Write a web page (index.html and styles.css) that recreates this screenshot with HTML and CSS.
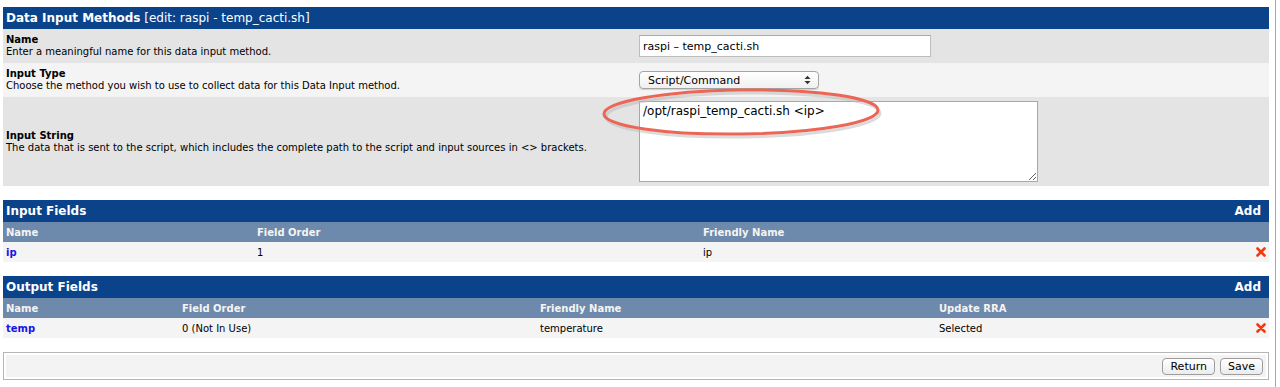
FILE: index.html
```html
<!DOCTYPE html>
<html lang="en">
<head>
  <meta charset="UTF-8">
  <title>Data Input Methods</title>
  <link rel="stylesheet" href="styles.css">
</head>
<body>
<div class="page">

  <!-- Edit form -->
  <div class="panel form">
    <div class="bar"><span class="bar-title"><b>Data Input Methods</b> [edit: raspi - temp_cacti.sh]</span></div>

    <div class="form-row dark">
      <div class="label"><b>Name</b><br>Enter a meaningful name for this data input method.</div>
      <div class="field"><input type="text" class="text-in" value="raspi – temp_cacti.sh"></div>
    </div>

    <div class="form-row light">
      <div class="label"><b>Input Type</b><br>Choose the method you wish to use to collect data for this Data Input method.</div>
      <div class="field">
        <span class="select-wrap">
          <select class="select-in"><option>Script/Command</option></select>
          <svg class="select-arrows" width="7" height="10" viewBox="0 0 7 10"><path d="M0.5 4 L3.5 0.8 L6.5 4 Z M0.5 6 L3.5 9.2 L6.5 6 Z" fill="#333"/></svg>
        </span>
      </div>
    </div>

    <div class="form-row dark tall">
      <div class="label"><b>Input String</b><br>The data that is sent to the script, which includes the complete path to the script and input sources in &lt;&gt; brackets.</div>
      <div class="field"><textarea class="area-in">/opt/raspi_temp_cacti.sh &lt;ip&gt;</textarea></div>
    </div>

    <!-- hand-drawn highlight over the input string -->
    <svg class="annot" width="300" height="60" viewBox="0 0 300 60">
      <ellipse cx="151" cy="30" rx="137" ry="22" transform="rotate(-0.8 151 30) translate(1 2)" fill="none" stroke="#b8b8b8" stroke-width="3" opacity="0.5"/>
      <ellipse cx="150" cy="29" rx="137" ry="22" transform="rotate(-0.8 150 29)" fill="none" stroke="#ec6656" stroke-width="3"/>
    </svg>
  </div>

  <!-- Input fields -->
  <div class="panel">
    <div class="bar"><span class="bar-title">Input Fields</span><a class="bar-link" href="#">Add</a></div>
    <div class="grid in-cols head">
      <span>Name</span><span>Field Order</span><span>Friendly Name</span><span></span>
    </div>
    <div class="grid in-cols row">
      <a class="item" href="#">ip</a><span>1</span><span>ip</span>
      <span class="del"><svg width="10" height="10" viewBox="0 0 10 10"><path d="M1.5 1.5 L8.5 8.5 M8.5 1.5 L1.5 8.5" stroke="#f23a10" stroke-width="2.6" stroke-linecap="round"/></svg></span>
    </div>
  </div>

  <!-- Output fields -->
  <div class="panel">
    <div class="bar"><span class="bar-title">Output Fields</span><a class="bar-link" href="#">Add</a></div>
    <div class="grid out-cols head">
      <span>Name</span><span>Field Order</span><span>Friendly Name</span><span>Update RRA</span><span></span>
    </div>
    <div class="grid out-cols row">
      <a class="item" href="#">temp</a><span>0 (Not In Use)</span><span>temperature</span><span>Selected</span>
      <span class="del"><svg width="10" height="10" viewBox="0 0 10 10"><path d="M1.5 1.5 L8.5 8.5 M8.5 1.5 L1.5 8.5" stroke="#f23a10" stroke-width="2.6" stroke-linecap="round"/></svg></span>
    </div>
  </div>

  <!-- Actions -->
  <div class="actions">
    <div class="actions-inner">
      <button class="btn">Return</button>
      <button class="btn">Save</button>
    </div>
  </div>

</div>
</body>
</html>
```

FILE: styles.css
```css
/* Base */
* { margin: 0; padding: 0; box-sizing: border-box; }
body { font-family: "DejaVu Sans", Verdana, sans-serif; font-size: 10px; color: #000; background: #fff; overflow: hidden; }

.page {
  width: 1276px; min-height: 100vh;
  padding: 7px 6px 8px 3px;
  border-right: 1px solid #a9a9a9;
  display: flex; flex-direction: column; gap: 14px;
}

/* Panels and title bars */
.panel { position: relative; }
.bar {
  display: flex; justify-content: space-between; align-items: center;
  height: 22px; padding: 0 8px 0 3px;
  background-color: #0b438b; color: #fff; font-size: 12px;
}
.panel .bar-title { font-weight: bold; }
.form .bar-title { font-weight: normal; }
.form .bar-title b { font-weight: bold; }
.bar-link { color: #fff; font-weight: bold; text-decoration: none; }

/* Form rows */
.form-row {
  display: grid; grid-template-columns: 633px 1fr; align-items: center;
  height: 34px; padding: 0 3px;
  line-height: 12px;
}
.form-row.dark { background-color: #e4e4e4; }
.form-row.light { background-color: #f4f4f4; }
.form-row.tall { height: 89px; }
.label b { font-weight: bold; }

.text-in {
  width: 292px; height: 22px; padding: 0 3px;
  border: 1px solid #bdbdbd; border-top-color: #a9a9a9;
  font-family: "DejaVu Sans", sans-serif; font-size: 11px; color: #000;
  background: #fff; outline: none;
}

.select-wrap { position: relative; display: inline-block; height: 18px; }
.select-in {
  appearance: none; -webkit-appearance: none;
  width: 180px; height: 18px; padding: 0 0 0 8px;
  border: 1px solid #a4a4a4; border-radius: 4px;
  background: linear-gradient(#ffffff, #f0f0f0);
  box-shadow: 0 1px 1px rgba(0,0,0,0.15);
  font-family: "DejaVu Sans", sans-serif; font-size: 11px; color: #000;
}
.select-arrows { position: absolute; right: 8px; top: 4px; pointer-events: none; }

.area-in {
  display: block; width: 399px; height: 81px; padding: 2px 3px;
  border: 1px solid #a8a8a8;
  font-family: "DejaVu Sans", sans-serif; font-size: 12px; color: #000;
  resize: both; background: #fff; outline: none;
}

.annot { position: absolute; left: 588px; top: 76px; pointer-events: none; overflow: visible; }

/* Field lists */
.grid { display: grid; align-items: center; height: 20px; }
.grid > * { padding: 0 3px; }
.in-cols { grid-template-columns: 251px 446px 1fr 20px; }
.out-cols { grid-template-columns: 176px 358px 399px 1fr 20px; }
.head { background-color: #6d89ab; color: #f4f4f4; font-weight: bold; }
.row { background-color: #f4f4f4; }
.item { color: #1616e6; font-weight: bold; text-decoration: none; }
.del { display: flex; justify-content: flex-end; }
.del svg { display: block; }

/* Actions box */
.actions { border: 1px solid #b6b6b6; padding: 2px; }
.actions-inner {
  display: flex; justify-content: flex-end; align-items: center; gap: 5px;
  height: 22px; padding-right: 3px; background-color: #f3f3f3;
}
.btn {
  height: 17px; padding: 0 7px;
  border: 1px solid #9c9c9c; border-radius: 4px;
  background: linear-gradient(#ffffff, #ececec);
  font-family: "DejaVu Sans", sans-serif; font-size: 11px; color: #000;
}
```
